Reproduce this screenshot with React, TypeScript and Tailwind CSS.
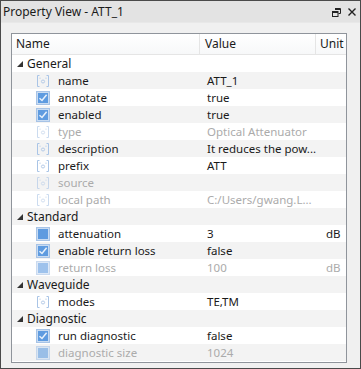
import React from "react";

type Kind = "str" | "check" | "num";

interface Row {
  group?: string;
  name?: string;
  value?: string;
  unit?: string;
  kind?: Kind;
  off?: boolean;
}

const rows: Row[] = [
  { group: "General" },
  { name: "name", value: "ATT_1", kind: "str" },
  { name: "annotate", value: "true", kind: "check" },
  { name: "enabled", value: "true", kind: "check" },
  { name: "type", value: "Optical Attenuator", kind: "str", off: true },
  { name: "description", value: "It reduces the pow...", kind: "str" },
  { name: "prefix", value: "ATT", kind: "str" },
  { name: "source", value: "", kind: "str", off: true },
  { name: "local path", value: "C:/Users/gwang.L...", kind: "str", off: true },
  { group: "Standard" },
  { name: "attenuation", value: "3", unit: "dB", kind: "num" },
  { name: "enable return loss", value: "false", kind: "check" },
  { name: "return loss", value: "100", unit: "dB", kind: "num", off: true },
  { group: "Waveguide" },
  { name: "modes", value: "TE,TM", kind: "str" },
  { group: "Diagnostic" },
  { name: "run diagnostic", value: "false", kind: "check" },
  { name: "diagnostic size", value: "1024", kind: "num", off: true },
];

function TypeIcon({ kind, off }: { kind: Kind; off?: boolean }) {
  if (kind === "str") {
    return (
      <svg width="14" height="14" viewBox="0 0 14 14" className={off ? "opacity-60" : ""}>
        <path d="M3.5 1.5H1.5V12.5H3.5" fill="none" stroke="#a9c4e6" strokeWidth="1" />
        <path d="M10.5 1.5H12.5V12.5H10.5" fill="none" stroke="#a9c4e6" strokeWidth="1" />
        <path d="M4 3.5V5M10 3.5V5" stroke="#c3d5ec" strokeWidth="1" />
        <ellipse cx="7" cy="7.5" rx="1.6" ry="1.5" fill="none" stroke="#b5cbe8" strokeWidth="1" />
      </svg>
    );
  }
  return (
    <svg width="14" height="14" viewBox="0 0 14 14" className={off ? "opacity-60" : ""}>
      <rect x="0.5" y="0.5" width="13" height="13" fill="#c9dcf2" stroke="#a7c3e6" />
      <rect x="2" y="2" width="10" height="10" fill="#5e9be0" />
      {kind === "check" && (
        <path d="M3.5 7.2L6 9.5L10.6 3.8" fill="none" stroke="#e8f1fb" strokeWidth="1.5" />
      )}
    </svg>
  );
}

export default function App() {
  return (
    <div
      className="w-[361px] h-[369px] flex flex-col border border-[#4a4a4a] bg-[#f0f0f0] text-[11.5px] text-[#1a1a1a] overflow-hidden"
      style={{ fontFamily: '"Noto Sans", "Open Sans", sans-serif' }}
    >
      <div className="h-[22px] flex items-center justify-between pl-[2px] pr-[4px] bg-[#e3e3e3] border-b border-[#e8e8e8]">
        <span className="leading-none text-[12px]">Property View - ATT_1</span>
        <div className="flex items-center gap-[7px] pt-[1px]">
          <svg width="9" height="9" viewBox="0 0 9 9">
            <path d="M3 0.5H8.5V5.5H6.5" fill="none" stroke="#222" strokeWidth="1" />
            <rect x="0.5" y="3.5" width="5.5" height="5" fill="none" stroke="#222" strokeWidth="1" />
            <path d="M3 1.5H8.5M0.5 4.5H6" stroke="#222" strokeWidth="1" />
          </svg>
          <svg width="8" height="8" viewBox="0 0 8 8">
            <path d="M0.5 0.5L7.5 7.5M7.5 0.5L0.5 7.5" stroke="#222" strokeWidth="1.4" />
          </svg>
        </div>
      </div>
      <div className="flex-1 pl-[10px] pr-[13px] pt-[10px] pb-[5px]">
        <div className="h-full bg-white border border-[#8f949b] flex flex-col">
          <div className="h-[21px] flex border-b border-[#e5e5e5] bg-gradient-to-b from-white to-[#f7f8f9] text-[12px]">
            <div className="w-[188px] pl-[4px] flex items-center border-r border-[#e5e5e5]">Name</div>
            <div className="w-[116px] pl-[5px] flex items-center border-r border-[#e5e5e5]">Value</div>
            <div className="flex-1 pl-[4px] flex items-center">Unit</div>
          </div>
          {rows.map((r, i) => (
            <div
              key={i}
              className={`h-[17px] flex items-center ${i % 2 === 1 ? "bg-[#f3f3f3]" : "bg-white"}`}
            >
              {r.group ? (
                <div className="flex items-center pl-[5px] text-[12px]">
                  <svg width="6" height="6" viewBox="0 0 6 6" className="mr-[4px] mt-[1px]">
                    <path d="M6 0V6H0Z" fill="#333" />
                  </svg>
                  <span>{r.group}</span>
                </div>
              ) : (
                <>
                  <div className={`w-[188px] flex items-center pl-[24px] ${r.off ? "text-[#ababab]" : ""}`}>
                    <TypeIcon kind={r.kind!} off={r.off} />
                    <span className="ml-[8px]">{r.name}</span>
                  </div>
                  <div className={`w-[116px] pl-[7px] whitespace-nowrap ${r.off ? "text-[#ababab]" : ""}`}>
                    {r.value}
                  </div>
                  <div className={`flex-1 pl-[10px] ${r.off ? "text-[#ababab]" : ""}`}>{r.unit}</div>
                </>
              )}
            </div>
          ))}
        </div>
      </div>
    </div>
  );
}
